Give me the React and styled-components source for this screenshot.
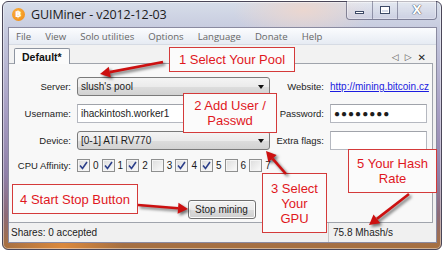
import React from 'react'
import styled, { createGlobalStyle } from 'styled-components'

const GlobalStyle = createGlobalStyle`
  html, body { margin: 0; padding: 0; background: #fff; }
  body { width: 447px; height: 255px; overflow: hidden; }
  * { box-sizing: border-box; }
`

const Window = styled.div`
  position: relative;
  margin: 1px 0 0 2px;
  width: 440px;
  height: 249px;
  border: 1px solid #4a4658;
  border-radius: 6px;
  padding: 0 4px 6px 5px;
  display: flex;
  flex-direction: column;
  background:
    radial-gradient(ellipse 70px 30px at 300px 8px, rgba(236, 214, 206, 0.95), transparent),
    radial-gradient(ellipse 60px 40px at 60px 245px, rgba(226, 140, 60, 0.9), transparent),
    linear-gradient(to bottom, #d6dde9 0%, #c3c6dc 14%, #a69dc2 45%, #8f80a8 70%, #8c6a78 86%, #a8703c 100%);
  box-shadow: inset 0 0 0 1px rgba(255, 255, 255, 0.45);
`

const TitleBar = styled.div`
  height: 25px;
  display: flex;
  align-items: center;
  padding-left: 4px;
`

const AppIcon = styled.span`
  width: 13px;
  height: 13px;
  border-radius: 50%;
  background: radial-gradient(circle at 40% 35%, #fbb040, #f08a12);
  color: #fff;
  font: bold 9px "DejaVu Sans", sans-serif;
  display: flex;
  align-items: center;
  justify-content: center;
  margin-top: -1px;
`

const Title = styled.span`
  margin-left: 6px;
  font: 12.5px "Open Sans", sans-serif;
  color: #1b1b1b;
  letter-spacing: -0.1px;
`

const Caption = styled.div`
  margin-left: auto;
  align-self: flex-start;
  margin-top: -1px;
  display: flex;
  height: 19px;
  border: 1px solid rgba(60, 60, 90, 0.55);
  border-top: none;
  border-radius: 0 0 4px 4px;
  overflow: hidden;
  box-shadow: inset 0 0 0 1px rgba(255, 255, 255, 0.45);
`

const CapBtn = styled.div`
  width: ${p => p.$w}px;
  display: flex;
  align-items: center;
  justify-content: center;
  background: linear-gradient(to bottom, rgba(255,255,255,0.35), rgba(200,200,225,0.25));
  & + & { border-left: 1px solid rgba(60, 60, 90, 0.45); }
`

const MinGlyph = styled.span`
  width: 9px;
  height: 3px;
  margin-top: 5px;
  background: #fff;
  border: 1px solid #3d4a66;
`

const MaxGlyph = styled.span`
  width: 10px;
  height: 8px;
  border: 1px solid #3d4a66;
  box-shadow: inset 0 0 0 1px #fff, inset 0 2px 0 1px #fff;
`

const CloseGlyph = styled.span`
  font: bold 12px "DejaVu Sans", sans-serif;
  color: #fff;
  text-shadow: 0 0 1px #2d3548, 0 0 1px #2d3548;
`

const Client = styled.div`
  flex: 1;
  display: flex;
  flex-direction: column;
  background: #f0f0f0;
  border: 1px solid #8a8aa0;
`

const MenuBar = styled.div`
  height: 17px;
  display: flex;
  align-items: center;
  padding-left: 0;
  background: linear-gradient(to bottom, #fbfcfe, #e6ebf3);
  border-bottom: 1px solid #d6dbe4;
  font: 9.6px "Open Sans", sans-serif;
  color: #666;
`

const MenuItem = styled.span`
  padding: 0 7px;
`

const TabRow = styled.div`
  height: 18px;
  display: flex;
  align-items: flex-end;
  padding-left: 5px;
  position: relative;
  background: #f2f2f2;
`

const Tab = styled.div`
  height: 16px;
  padding: 0 7px;
  border: 1px solid #8d94a0;
  border-bottom: none;
  border-radius: 2px 2px 0 0;
  background: #fbfbfb;
  font: bold 10.5px "Liberation Sans", sans-serif;
  color: #111;
  display: flex;
  align-items: center;
  margin-bottom: -1px;
  position: relative;
  z-index: 1;
`

const TabNav = styled.div`
  margin-left: auto;
  margin-right: 10px;
  display: flex;
  gap: 6px;
  font: 9px "DejaVu Sans", sans-serif;
  color: #555;
  & > span:last-child { color: #222; font-size: 10px; }
`

const Panel = styled.div`
  height: 160px;
  margin-right: 3px;
  border: 1px solid #a0a4ac;
  border-left: none;
  background: #f8f8f8;
  display: flex;
  flex-direction: column;
  font: 9.5px "Liberation Sans", sans-serif;
  color: #1c1c1c;
`

const Form = styled.div`
  display: grid;
  grid-template-columns: 62px 193px 48px 97px;
  grid-template-rows: 19px 19px 19px 14px;
  column-gap: 6px;
  row-gap: 8px;
  padding-top: 13px;
  align-items: center;
`

const Label = styled.span`
  text-align: right;
  white-space: nowrap;
`

const Combo = styled.div`
  height: 19px;
  border: 1px solid #7a7a7a;
  border-radius: 3px;
  background: linear-gradient(to bottom, #f4f4f4 0%, #ebebeb 50%, #dddddd 51%, #d2d2d2 100%);
  display: flex;
  align-items: center;
  padding: 0 5px 0 3px;
  font-size: 10px;
  &::after {
    content: '';
    margin-left: auto;
    border: 3.5px solid transparent;
    border-top: 4px solid #111;
    margin-top: 4px;
  }
`

const Input = styled.div`
  height: 19px;
  border: 1px solid #b5b8c0;
  border-top-color: #a0a3aa;
  background: #fff;
  display: flex;
  align-items: center;
  padding: 0 3px;
  font-size: 10px;
  letter-spacing: ${p => (p.$secret ? '1px' : 'normal')};
`

const Link = styled.a`
  color: #1c1ce0;
  text-decoration: underline;
  font-size: 10px;
  white-space: nowrap;
`

const Affinity = styled.div`
  grid-column: 2 / 5;
  display: flex;
`

const CheckItem = styled.label`
  width: 24.6px;
  display: flex;
  align-items: center;
  gap: 3px;
  font-size: 10px;
`

const Box = styled.span`
  width: 13px;
  height: 13px;
  border: 1px solid #8e8f8f;
  background: linear-gradient(135deg, #dcdcdc, #fbfbfb);
  box-shadow: inset 0 0 0 1px #f4f4f4;
  display: flex;
  align-items: center;
  justify-content: center;
`

const ButtonRow = styled.div`
  display: flex;
  justify-content: center;
  margin-top: 28px;
  padding-left: 2px;
`

const Button = styled.div`
  width: 68px;
  height: 19px;
  border: 1px solid #707070;
  border-radius: 3px;
  background: linear-gradient(to bottom, #f2f2f2 0%, #ebebeb 50%, #dddddd 51%, #cfcfcf 100%);
  box-shadow: inset 0 0 0 1px #fcfcfc;
  display: flex;
  align-items: center;
  justify-content: center;
  font-size: 10px;
`

const StatusBar = styled.div`
  flex: 1;
  display: flex;
  align-items: center;
  background: #f0f0f0;
  font: 10px "Liberation Sans", sans-serif;
  color: #1c1c1c;
`

const StatusField = styled.div`
  width: ${p => p.$w || 'auto'};
  flex: ${p => (p.$w ? 'none' : 1)};
  height: 100%;
  display: flex;
  align-items: center;
  padding-left: ${p => p.$pad}px;
  & + & { border-left: 1px solid #c8c8c8; }
`

const Callout = styled.div`
  position: absolute;
  left: ${p => p.$x}px;
  top: ${p => p.$y}px;
  width: ${p => p.$w}px;
  height: ${p => p.$h}px;
  border: 1px solid #d43a3a;
  background: #fbfbfb;
  color: #e0181e;
  font: 13px/15px "Liberation Sans", sans-serif;
  display: flex;
  flex-direction: column;
  align-items: center;
  justify-content: center;
  text-align: center;
  white-space: nowrap;
`

const Arrows = styled.svg`
  position: absolute;
  left: 0;
  top: 0;
  width: 447px;
  height: 255px;
  pointer-events: none;
  filter: drop-shadow(2px 2px 1.5px rgba(0, 0, 0, 0.55));
`

const Overlay = styled.div`
  position: absolute;
  left: 0;
  top: 0;
  width: 447px;
  height: 255px;
`

function Check({ on }) {
  return (
    <Box>
      {on && (
        <svg width="9" height="9" viewBox="0 0 9 9">
          <path d="M1 4.5 L3.5 7.5 L8 1" fill="none" stroke="#2c3f8a" strokeWidth="1.6" />
        </svg>
      )}
    </Box>
  )
}

function Arrow({ x1, y1, x2, y2 }) {
  const a = Math.atan2(y2 - y1, x2 - x1)
  const len = 10
  const wing = 5.5
  const bx = x2 - len * Math.cos(a)
  const by = y2 - len * Math.sin(a)
  const px = -Math.sin(a) * wing
  const py = Math.cos(a) * wing
  return (
    <g>
      <line x1={x1} y1={y1} x2={bx} y2={by} stroke="#cc1010" strokeWidth="2.6" />
      <polygon points={`${x2},${y2} ${bx + px},${by + py} ${bx - px},${by - py}`} fill="#cc1010" />
    </g>
  )
}

const cpus = [true, true, true, false, true, true, false, false]
const menus = ['File', 'View', 'Solo utilities', 'Options', 'Language', 'Donate', 'Help']

export default function App() {
  return (
    <>
      <GlobalStyle />
      <Window>
        <TitleBar>
          <AppIcon>฿</AppIcon>
          <Title>GUIMiner - v2012-12-03</Title>
          <Caption>
            <CapBtn $w={25}><MinGlyph /></CapBtn>
            <CapBtn $w={25}><MaxGlyph /></CapBtn>
            <CapBtn $w={39}><CloseGlyph>X</CloseGlyph></CapBtn>
          </Caption>
        </TitleBar>
        <Client>
          <MenuBar>
            {menus.map(m => <MenuItem key={m}>{m}</MenuItem>)}
          </MenuBar>
          <TabRow>
            <Tab>Default*</Tab>
            <TabNav><span>◁</span><span>▷</span><span>✕</span></TabNav>
          </TabRow>
          <Panel>
            <Form>
              <Label>Server:</Label>
              <Combo>slush's pool</Combo>
              <Label>Website:</Label>
              <Link>http://mining.bitcoin.cz</Link>

              <Label>Username:</Label>
              <Input>ihackintosh.worker1</Input>
              <Label>Password:</Label>
              <Input $secret>●●●●●●●●</Input>

              <Label>Device:</Label>
              <Combo>[0-1] ATI RV770</Combo>
              <Label>Extra flags:</Label>
              <Input />

              <Label>CPU Affinity:</Label>
              <Affinity>
                {cpus.map((on, i) => (
                  <CheckItem key={i}><Check on={on} />{i}</CheckItem>
                ))}
              </Affinity>
            </Form>
            <ButtonRow>
              <Button>Stop mining</Button>
            </ButtonRow>
          </Panel>
          <StatusBar>
            <StatusField $w="319px" $pad={2}>Shares: 0 accepted</StatusField>
            <StatusField $pad={4}>75.8 Mhash/s</StatusField>
          </StatusBar>
        </Client>
      </Window>
      <Overlay>
        <Callout $x={169} $y={47} $w={126} $h={25}>1 Select Your Pool</Callout>
        <Callout $x={183} $y={93} $w={94} $h={40}><span>2 Add User /</span><span>Passwd</span></Callout>
        <Callout $x={262} $y={173} $w={65} $h={60}><span>3 Select</span><span>Your</span><span>GPU</span></Callout>
        <Callout $x={12} $y={184} $w={126} $h={30}>4 Start Stop Button</Callout>
        <Callout $x={348} $y={149} $w={89} $h={44}><span>5 Your Hash</span><span>Rate</span></Callout>
        <Arrows viewBox="0 0 447 255">
          <Arrow x1={163} y1={62} x2={100} y2={74} />
          <Arrow x1={286} y1={174} x2={266} y2={151} />
          <Arrow x1={138} y1={205} x2={188} y2={209} />
          <Arrow x1={409} y1={194} x2={369} y2={225} />
        </Arrows>
      </Overlay>
    </>
  )
}
